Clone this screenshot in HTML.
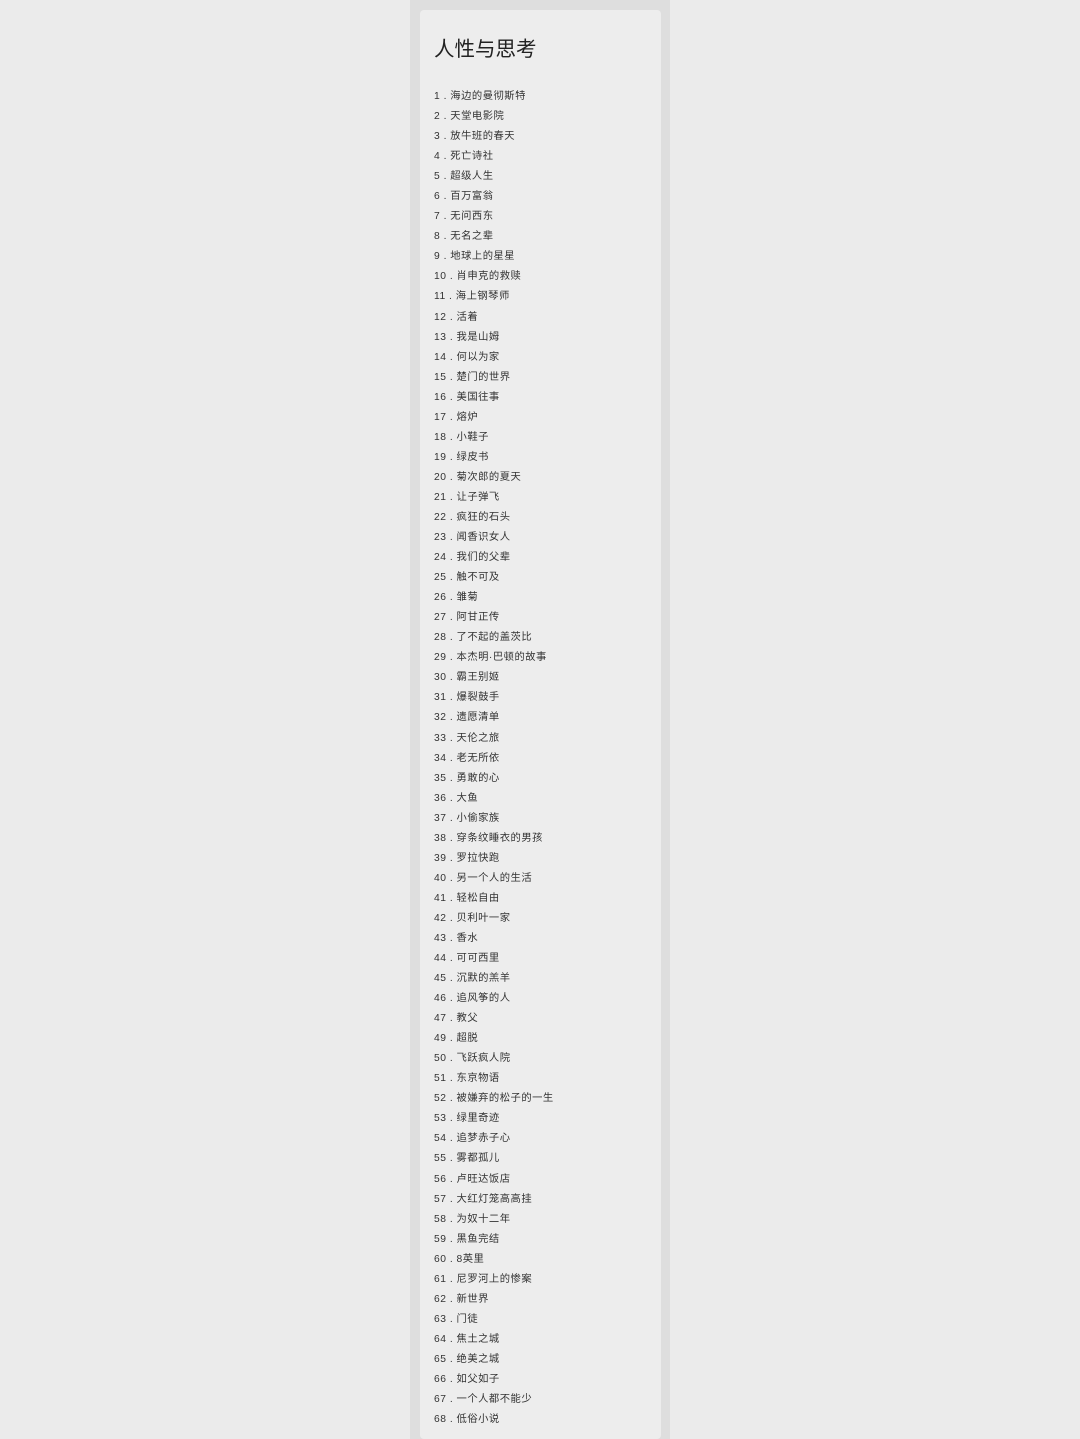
<!DOCTYPE html>
<html><head><meta charset="utf-8"><style>
html,body{margin:0;padding:0;width:1080px;height:1439px;overflow:hidden}
body{background:#ebebeb;position:relative;font-family:"Liberation Sans","Noto Sans CJK SC",sans-serif}
.strip{position:absolute;left:410px;top:0;width:260px;height:1439px;background:#dedede}
.card{position:absolute;left:420px;top:10px;width:241px;height:1429px;background:#ededed;border-radius:4px}
h1{position:absolute;left:434px;top:32px;margin:0;font-size:20.5px;font-weight:normal;color:#222;font-family:"Noto Sans CJK SC",sans-serif}
ul{position:absolute;left:434px;top:89px;margin:0;padding:0;list-style:none}
li{height:20.05px;line-height:16px;font-size:10.3px;color:#333;letter-spacing:0.5px;white-space:nowrap}
</style></head><body>
<div class="strip"></div><div class="card"></div>
<h1>人性与思考</h1>
<ul>
<li>1 . 海边的曼彻斯特</li><li>2 . 天堂电影院</li><li>3 . 放牛班的春天</li><li>4 . 死亡诗社</li><li>5 . 超级人生</li><li>6 . 百万富翁</li><li>7 . 无问西东</li><li>8 . 无名之辈</li><li>9 . 地球上的星星</li><li>10 . 肖申克的救赎</li><li>11 . 海上钢琴师</li><li>12 . 活着</li><li>13 . 我是山姆</li><li>14 . 何以为家</li><li>15 . 楚门的世界</li><li>16 . 美国往事</li><li>17 . 熔炉</li><li>18 . 小鞋子</li><li>19 . 绿皮书</li><li>20 . 菊次郎的夏天</li><li>21 . 让子弹飞</li><li>22 . 疯狂的石头</li><li>23 . 闻香识女人</li><li>24 . 我们的父辈</li><li>25 . 触不可及</li><li>26 . 雏菊</li><li>27 . 阿甘正传</li><li>28 . 了不起的盖茨比</li><li>29 . 本杰明·巴顿的故事</li><li>30 . 霸王别姬</li><li>31 . 爆裂鼓手</li><li>32 . 遗愿清单</li><li>33 . 天伦之旅</li><li>34 . 老无所依</li><li>35 . 勇敢的心</li><li>36 . 大鱼</li><li>37 . 小偷家族</li><li>38 . 穿条纹睡衣的男孩</li><li>39 . 罗拉快跑</li><li>40 . 另一个人的生活</li><li>41 . 轻松自由</li><li>42 . 贝利叶一家</li><li>43 . 香水</li><li>44 . 可可西里</li><li>45 . 沉默的羔羊</li><li>46 . 追风筝的人</li><li>47 . 教父</li><li>49 . 超脱</li><li>50 . 飞跃疯人院</li><li>51 . 东京物语</li><li>52 . 被嫌弃的松子的一生</li><li>53 . 绿里奇迹</li><li>54 . 追梦赤子心</li><li>55 . 雾都孤儿</li><li>56 . 卢旺达饭店</li><li>57 . 大红灯笼高高挂</li><li>58 . 为奴十二年</li><li>59 . 黑鱼完结</li><li>60 . 8英里</li><li>61 . 尼罗河上的惨案</li><li>62 . 新世界</li><li>63 . 门徒</li><li>64 . 焦土之城</li><li>65 . 绝美之城</li><li>66 . 如父如子</li><li>67 . 一个人都不能少</li><li>68 . 低俗小说</li>
</ul>
</body></html>
